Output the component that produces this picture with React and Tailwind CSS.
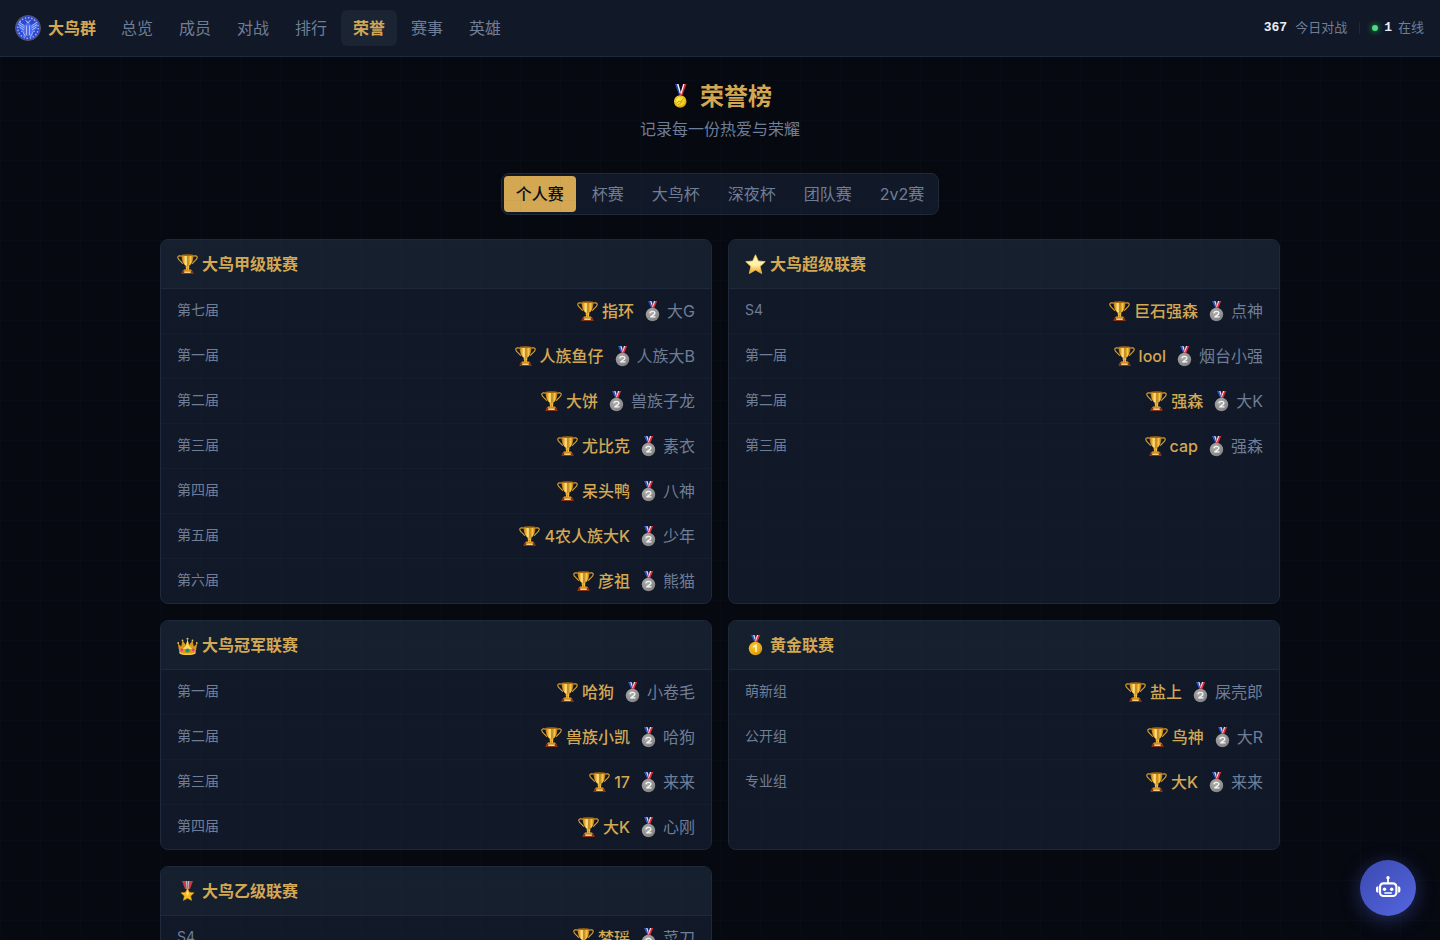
import React from 'react';

const NAV = ['总览', '成员', '对战', '排行', '荣誉', '赛事', '英雄'];
const TABS = ['个人赛', '杯赛', '大鸟杯', '深夜杯', '团队赛', '2v2赛'];

const LEAGUES = [
  {
    title: '大鸟甲级联赛',
    icon: Trophy,
    rows: [
      ['第七届', '指环', '大G'],
      ['第一届', '人族鱼仔', '人族大B'],
      ['第二届', '大饼', '兽族子龙'],
      ['第三届', '尤比克', '素衣'],
      ['第四届', '呆头鸭', '八神'],
      ['第五届', '4农人族大K', '少年'],
      ['第六届', '彦祖', '熊猫'],
    ],
  },
  {
    title: '大鸟超级联赛',
    icon: Star,
    rows: [
      ['S4', '巨石强森', '点神'],
      ['第一届', 'lool', '烟台小强'],
      ['第二届', '强森', '大K'],
      ['第三届', 'cap', '强森'],
    ],
  },
  {
    title: '大鸟冠军联赛',
    icon: Crown,
    rows: [
      ['第一届', '哈狗', '小卷毛'],
      ['第二届', '兽族小凯', '哈狗'],
      ['第三届', '17', '来来'],
      ['第四届', '大K', '心刚'],
    ],
  },
  {
    title: '黄金联赛',
    icon: GoldMedal,
    rows: [
      ['萌新组', '盐上', '屎壳郎'],
      ['公开组', '鸟神', '大R'],
      ['专业组', '大K', '来来'],
    ],
  },
  {
    title: '大鸟乙级联赛',
    icon: MilitaryMedal,
    rows: [['S4', '梦瑶', '菜刀']],
  },
];

function IconDefs() {
  return (
    <svg className="absolute h-0 w-0" aria-hidden="true">
      <defs>
        <linearGradient id="cup" x1="0" x2="1" y1="0" y2="0">
          <stop offset="0" stopColor="#b87310" />
          <stop offset="0.22" stopColor="#eeb02c" />
          <stop offset="0.38" stopColor="#fff0a0" />
          <stop offset="0.52" stopColor="#c17c0c" />
          <stop offset="0.76" stopColor="#f9c743" />
          <stop offset="1" stopColor="#a5640a" />
        </linearGradient>
        <linearGradient id="starFill" x1="0" x2="0" y1="0" y2="1">
          <stop offset="0" stopColor="#fff6c4" />
          <stop offset="0.55" stopColor="#fff2a8" />
          <stop offset="1" stopColor="#f79a12" />
        </linearGradient>
        <radialGradient id="silver" cx="0.4" cy="0.35" r="0.7">
          <stop offset="0" stopColor="#b0b0b0" />
          <stop offset="0.7" stopColor="#8e8e8e" />
          <stop offset="1" stopColor="#707070" />
        </radialGradient>
        <radialGradient id="gold" cx="0.4" cy="0.35" r="0.7">
          <stop offset="0" stopColor="#f9c92a" />
          <stop offset="0.7" stopColor="#e8a50f" />
          <stop offset="1" stopColor="#b87505" />
        </radialGradient>
        <radialGradient id="sport" cx="0.4" cy="0.35" r="0.7">
          <stop offset="0" stopColor="#fff04a" />
          <stop offset="0.7" stopColor="#f2cc1c" />
          <stop offset="1" stopColor="#c48a08" />
        </radialGradient>
      </defs>
    </svg>
  );
}

function Trophy({ className }) {
  return (
    <svg viewBox="0 0 42 42" className={className} aria-hidden="true">
      <path
        d="M10.500 4.500C6 3 1.500 3.500 1.500 6.500c0 5.500 6 7 10 13M31.500 4.500c4.500-1.500 9-1 9 2 0 5.500-6 7-10 13"
        fill="none"
        stroke="#d9a032"
        strokeWidth="2.300"
      />
      <path d="M9 2h24c0 10-3 18-9 22h-6C12 20 9 12 9 2z" fill="url(#cup)" />
      <ellipse cx="21" cy="2.300" rx="12" ry="1.600" fill="#a8680c" />
      <path d="M18.500 23h5l1 9h-7z" fill="url(#cup)" />
      <path d="M17 25h8v2h-8z" fill="#f5c04a" />
      <path d="M14 31h14l2 3H12z" fill="#e9a92c" />
      <path d="M10.500 33.500h21L33.500 40h-25z" fill="#8a3410" />
      <path d="M14.500 34.500h13v3.500h-13z" fill="#f3cf7c" />
    </svg>
  );
}

function Star({ className }) {
  return (
    <svg viewBox="0 0 42 42" className={className} aria-hidden="true">
      <path
        d="M21 1.500l5.600 12.500 13.900 1.200-10.300 9.600L33.400 39 21 32 8.600 39l3.200-14.200L1.500 15.200 15.400 14z"
        fill="url(#starFill)"
        stroke="#f8c653"
        strokeWidth="1.600"
        strokeLinejoin="round"
      />
    </svg>
  );
}

function Crown({ className }) {
  return (
    <svg viewBox="0 0 42 42" className={className} aria-hidden="true">
      <path
        d="M5 36L1.500 17l7 6L11 11l7 9 3-12 3 12 7-9 2.500 12 7-6L37 36c-4 4-28 4-32 0z"
        fill="#d99a1c"
      />
      <path d="M18 21l3-12 3 12 6 7H12z" fill="#ffd95c" />
      <path d="M5 34c6 4 26 4 32 0v3c-6 4-26 4-32 0z" fill="#f7c93f" />
      <g fill="#e9c463">
        <circle cx="2.500" cy="16" r="1.800" />
        <circle cx="11" cy="11" r="1.800" />
        <circle cx="21" cy="7.500" r="2" />
        <circle cx="31" cy="11" r="1.800" />
        <circle cx="39.500" cy="16" r="1.800" />
      </g>
      <ellipse cx="21" cy="31" rx="4.400" ry="4" fill="#0c9b7c" />
      <circle cx="9.500" cy="30" r="2.900" fill="#e23a96" />
      <circle cx="32.500" cy="30" r="2.900" fill="#e23a96" />
    </svg>
  );
}

function Ribbon() {
  return (
    <>
      <path d="M12 0h8l4.500 14h-6z" fill="#2f55c4" />
      <path d="M16.500 0h2l4.500 13h-2z" fill="#f4f5fa" />
      <path d="M30.500 0H23l-4.500 14h6z" fill="#d92f3c" />
      <path d="M26.500 0h-2l-4 11 1 2z" fill="#f4f5fa" />
    </>
  );
}

function SilverMedal({ className }) {
  return (
    <svg viewBox="0 0 42 42" className={className} aria-hidden="true">
      <Ribbon />
      <circle cx="21" cy="27" r="13.500" fill="url(#silver)" />
      <circle cx="21" cy="27" r="11.800" fill="none" stroke="#a0a0a0" strokeWidth="0.800" />
      <path
        d="M16 24.500c0-5 9.800-5 9.800-.5 0 3.500-5.500 4.500-8.300 7.800h9.500"
        fill="none"
        stroke="#f4f4f4"
        strokeWidth="2.800"
        strokeLinejoin="round"
      />
    </svg>
  );
}

function GoldMedal({ className }) {
  return (
    <svg viewBox="0 0 42 42" className={className} aria-hidden="true">
      <Ribbon />
      <circle cx="21" cy="27" r="13.500" fill="url(#gold)" />
      <circle cx="21" cy="27" r="11.800" fill="none" stroke="#f6c53c" strokeWidth="0.800" />
      <path d="M16.500 24l5.500-3.500v13.500" fill="none" stroke="#fff0bb" strokeWidth="3.400" />
    </svg>
  );
}

function SportMedal({ className }) {
  return (
    <svg viewBox="0 0 48 48" className={className} aria-hidden="true">
      <path d="M14 -2h7l6 22h-5z" fill="#2a4ab0" />
      <path d="M18 -2h3l6 22h-2.500z" fill="#f4f5fa" />
      <path d="M37 -2h-7l-6 22h5z" fill="#d92f3c" />
      <path d="M33 -2h-2.500l-5 17 1.200 4z" fill="#f4f5fa" />
      <circle cx="24.500" cy="33" r="12.500" fill="url(#sport)" />
      <circle cx="24.500" cy="33" r="10.300" fill="none" stroke="#cf9c10" strokeWidth="1" />
      <path d="M17 37l5-5 3 2 6-7M21 40l8-8" fill="none" stroke="#c98d0b" strokeWidth="1.800" />
    </svg>
  );
}

function MilitaryMedal({ className }) {
  return (
    <svg viewBox="0 0 42 42" className={className} aria-hidden="true">
      <path d="M10 0h22l-6 16H16z" fill="#d8323a" />
      <path d="M17.500 0h7l-1.500 16h-4z" fill="#b4bac4" />
      <path d="M20 0h2l-.300 16h-1.400z" fill="#6d7580" />
      <path
        d="M21 14l4 8.600 9.400 1-7 6.300 2 9.300-8.400-4.700-8.400 4.700 2-9.300-7-6.300 9.400-1z"
        fill="#f4bd22"
        stroke="#d18f0c"
        strokeWidth="1"
      />
      <path d="M21 18l2.500 6.500L21 30l-2.500-5.500z" fill="#ffe680" />
    </svg>
  );
}

function Logo() {
  return (
    <svg viewBox="0 0 52 52" className="size-[26px]" aria-hidden="true">
      <circle cx="26" cy="26" r="25" fill="#2c48d0" stroke="#6d6046" strokeWidth="1.600" />
      <circle cx="26" cy="26" r="20.500" fill="none" stroke="#9db2f6" strokeWidth="3" strokeDasharray="3 3.400" />
      <path d="M6 14l14 6 6-10 6 10 14-6-3 14-9 6 3 12-11-4-11 4 3-12-9-6z" fill="#4d6bea" />
      <path
        d="M8 14l11 8M8 19l11 7M9 24l9 6M44 14l-11 8M44 19l-11 7M43 24l-9 6M21 10l5 6 5-6M23 21v19M29 21v19M17 36l4 7M35 36l-4 7M12 32l6 3M40 32l-6 3"
        fill="none"
        stroke="#aebefa"
        strokeWidth="1.900"
      />
    </svg>
  );
}

function Robot() {
  return (
    <svg viewBox="0 0 28 28" className="size-7" aria-hidden="true">
      <rect x="6" y="9.300" width="16.400" height="12.700" rx="3.600" fill="none" stroke="#fff" strokeWidth="2.200" />
      <path d="M14 4v5" stroke="#fff" strokeWidth="1.800" />
      <circle cx="14" cy="3.700" r="1.700" fill="#fff" />
      <path d="M4.300 12.300v6.400c-1.400 0-2.300-.7-2.300-2v-2.400c0-1.300.9-2 2.300-2zM24.100 12.300v6.400c1.400 0 2.300-.7 2.300-2v-2.400c0-1.300-.9-2-2.300-2z" fill="#fff" />
      <circle cx="10.500" cy="15.300" r="1.750" fill="#fff" />
      <circle cx="17.700" cy="15.300" r="1.750" fill="#fff" />
      <path d="M10.800 19h6.600" stroke="#fff" strokeWidth="1.300" strokeLinecap="round" />
    </svg>
  );
}

function LeagueCard({ title, icon: Icon, rows }) {
  return (
    <section className="overflow-hidden rounded-lg border border-[#1e293b] bg-[#111827]">
      <h2 className="flex h-[49px] items-center gap-1 border-b border-[#1e293b] bg-[#151f2d] px-4 text-base font-semibold text-[#d4a853]">
        <Icon className="size-[21px]" />
        {title}
      </h2>
      <ul className="divide-y divide-[#131e2d]">
        {rows.map(([term, winner, second]) => (
          <li key={term} className="flex items-center justify-between px-4 py-2.5">
            <span className="pb-0.5 text-sm text-[#6f7e98]">{term}</span>
            <span className="flex items-center gap-2 text-base">
              <span className="flex items-center gap-1 font-medium text-[#d4a853]">
                <Trophy className="size-[21px]" />
                {winner}
              </span>
              <span className="flex items-center gap-1 text-[#6f7e98]">
                <SilverMedal className="size-[21px]" />
                {second}
              </span>
            </span>
          </li>
        ))}
      </ul>
    </section>
  );
}

export default function App() {
  return (
    <div className="min-h-screen bg-[#060910] font-['Inter','Noto_Sans_CJK_SC',sans-serif] text-[#6f7e98]">
      <IconDefs />
      <header className="sticky top-0 z-20 flex h-[57px] items-center justify-between border-b border-[#1e293b] bg-[#111827] pr-4 pl-[15px]">
        <div className="flex items-center gap-[13px]">
          <a href="#home" className="flex items-center gap-[7px] text-base font-bold text-[#d4a853]">
            <Logo />
            大鸟群
          </a>
          <nav className="flex items-center gap-0.5">
            {NAV.map((item) => (
              <a
                key={item}
                href="#nav"
                className={
                  item === '荣誉'
                    ? 'rounded-md bg-[#1a2433] px-3 py-1.5 font-bold text-[#d4a853]'
                    : 'rounded-md px-3 py-1.5'
                }
              >
                {item}
              </a>
            ))}
          </nav>
        </div>
        <div className="flex items-center gap-3 text-[13px]">
          <span className="flex items-center gap-2">
            <b className="font-['Liberation_Mono',monospace] font-bold text-[#e8edf5]">367</b>
            今日对战
          </span>
          <span className="h-3 w-px bg-[#1e293b]" />
          <span className="flex items-center gap-1.5">
            <span className="size-1.5 rounded-full bg-[#4ade80] shadow-[0_0_6px_#22c55e]" />
            <b className="font-['Liberation_Mono',monospace] font-bold text-[#e8edf5]">1</b>
            在线
          </span>
        </div>
      </header>

      <main className="mx-auto max-w-[1152px] px-4 py-6">
        <div className="mb-8 text-center">
          <h1 className="flex items-center justify-center gap-2 text-2xl font-bold text-[#d4a853]">
            <SportMedal className="size-6 overflow-visible" />
            荣誉榜
          </h1>
          <p className="mt-1">记录每一份热爱与荣耀</p>
        </div>

        <div className="mb-6 flex justify-center">
          <div role="tablist" className="flex gap-1 rounded-lg border border-[#1e293b] bg-[#111827] p-0.5">
            {TABS.map((tab, i) => (
              <button
                key={tab}
                type="button"
                role="tab"
                aria-selected={i === 0}
                className={
                  i === 0
                    ? 'rounded bg-[#d4a853] px-3 py-1.5 font-medium text-[#0a0e17]'
                    : 'rounded px-3 py-1.5'
                }
              >
                {tab}
              </button>
            ))}
          </div>
        </div>

        <div className="grid grid-cols-1 gap-4 md:grid-cols-2">
          {LEAGUES.map((league) => (
            <LeagueCard key={league.title} {...league} />
          ))}
        </div>
      </main>

      <div className="pointer-events-none fixed inset-0 z-10 bg-[linear-gradient(rgba(45,90,110,0.05)_1px,transparent_1px),linear-gradient(90deg,rgba(45,90,110,0.05)_1px,transparent_1px)] bg-[size:40px_40px]" />

      <button
        type="button"
        aria-label="AI 助手"
        className="fixed right-6 bottom-6 z-20 flex size-14 items-center justify-center rounded-full bg-linear-to-br from-[#3b4ab0] to-[#5566e0] shadow-[0_4px_20px_rgba(79,95,220,0.4)]"
      >
        <Robot />
      </button>
    </div>
  );
}
